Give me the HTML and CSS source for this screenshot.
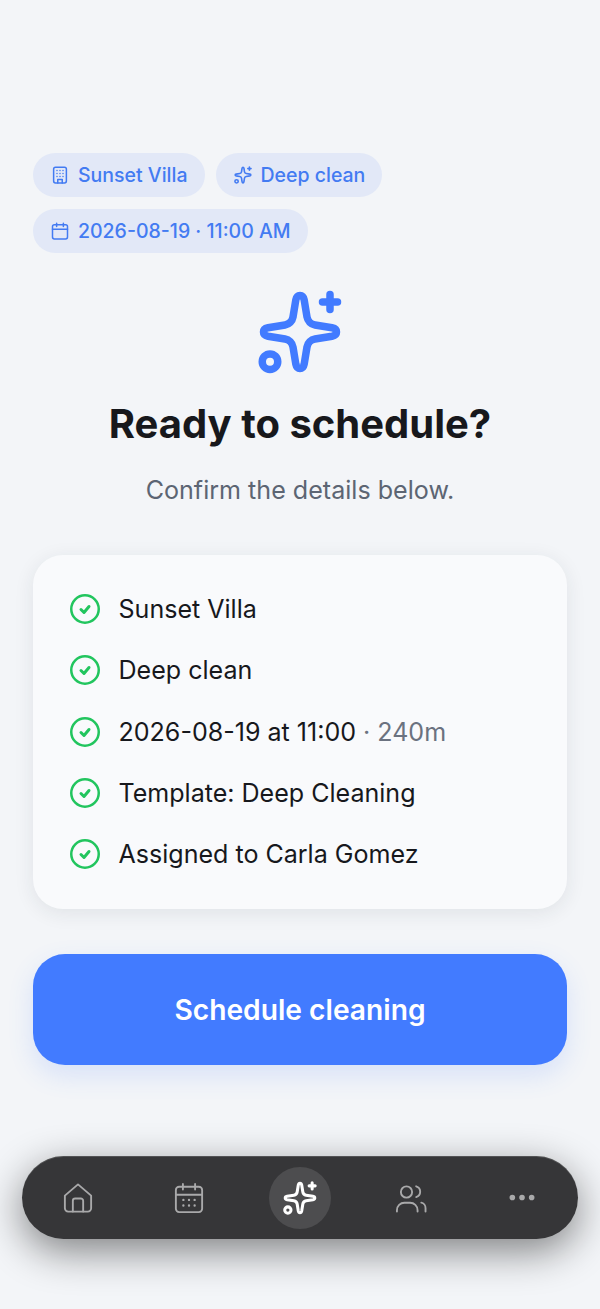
FILE: index.html
```html
<!DOCTYPE html>
<html lang="en">
<head>
  <meta charset="UTF-8" />
  <title>Schedule cleaning</title>
  <link rel="stylesheet" href="styles.css">
</head>
<body>
  <div class="page">
    <div class="pills">
      <span class="pill">
        <svg class="pill-icon" viewBox="0 0 24 24"><rect x="3.500" y="1.500" width="17" height="21" rx="2.500"/><path d="M9 22.500v-4.500h6v4.500"/><path class="dots" d="M8 6h.01M12 6h.01M16 6h.01M8 10h.01M12 10h.01M16 10h.01M8 14h.01M12 14h.01M16 14h.01"/></svg>
        Sunset Villa
      </span>
      <span class="pill">
        <svg class="pill-icon" viewBox="0 0 84 84"><use href="#sparkle"/></svg>
        Deep clean
      </span>
      <span class="pill">
        <svg class="pill-icon" viewBox="0 0 24 24"><rect x="2" y="3.500" width="20" height="19" rx="2.500"/><path d="M2 9.500h20M7.500 1.500v4.500M16.500 1.500v4.500"/></svg>
        2026-08-19 · 11:00 AM
      </span>
    </div>

    <div class="hero">
      <svg class="hero-icon" viewBox="0 0 84 84">
        <defs>
          <g id="sparkle">
            <path d="M42 5.500C44.500 5.500 45.700 7.500 46.200 10L49 27C49.700 31 53 34.300 57 35L74 37.800C76.500 38.300 78.500 39.500 78.500 42C78.500 44.500 76.500 45.700 74 46.200L57 49C53 49.700 49.700 53 49 57L46.200 74C45.700 76.500 44.500 78.500 42 78.500C39.500 78.500 38.300 76.500 37.800 74L35 57C34.300 53 31 49.700 27 49L10 46.200C7.500 45.700 5.500 44.500 5.500 42C5.500 39.500 7.500 38.300 10 37.800L27 35C31 34.300 34.300 31 35 27L37.800 10C38.300 7.500 39.500 5.500 42 5.500z"/>
            <path d="M72 4.500v15M64.500 12h15"/>
            <circle cx="12" cy="71.700" r="7.750"/>
          </g>
        </defs>
        <use href="#sparkle"/>
      </svg>
      <h1>Ready to schedule?</h1>
      <p>Confirm the details below.</p>
    </div>

    <div class="card">
      <div class="check-row">
        <svg class="check" viewBox="0 0 32 32"><circle cx="16" cy="16" r="13.750"/><path class="tick" d="M12 16.500l3 3 5-6"/></svg>
        <span>Sunset Villa</span>
      </div>
      <div class="check-row">
        <svg class="check" viewBox="0 0 32 32"><circle cx="16" cy="16" r="13.750"/><path class="tick" d="M12 16.500l3 3 5-6"/></svg>
        <span>Deep clean</span>
      </div>
      <div class="check-row">
        <svg class="check" viewBox="0 0 32 32"><circle cx="16" cy="16" r="13.750"/><path class="tick" d="M12 16.500l3 3 5-6"/></svg>
        <span>2026-08-19 at 11:00 <span class="muted">· 240m</span></span>
      </div>
      <div class="check-row">
        <svg class="check" viewBox="0 0 32 32"><circle cx="16" cy="16" r="13.750"/><path class="tick" d="M12 16.500l3 3 5-6"/></svg>
        <span>Template: Deep Cleaning</span>
      </div>
      <div class="check-row">
        <svg class="check" viewBox="0 0 32 32"><circle cx="16" cy="16" r="13.750"/><path class="tick" d="M12 16.500l3 3 5-6"/></svg>
        <span>Assigned to Carla Gomez</span>
      </div>
    </div>

    <button class="schedule-btn">Schedule cleaning</button>
  </div>

  <nav class="tabbar">
    <a class="tab">
      <svg viewBox="0 0 32 32"><path d="M2 13.500L16 1.500l14 12V27a3.500 3.500 0 0 1-3.500 3.500h-21A3.500 3.500 0 0 1 2 27z"/><path d="M10.500 30.500V19a2.500 2.500 0 0 1 2.500-2.500h6a2.500 2.500 0 0 1 2.500 2.500v11.500"/></svg>
    </a>
    <a class="tab">
      <svg viewBox="0 0 32 32"><rect x="2" y="4" width="28" height="27" rx="3.500"/><path d="M2 12.500h28M9.500 1v6M22.500 1v6"/><path class="cal-dots" d="M10 18h.01M16 18h.01M22 18h.01M10 24h.01M16 24h.01M22 24h.01"/></svg>
    </a>
    <a class="tab tab-active">
      <svg viewBox="0 0 84 84"><use href="#sparkle"/></svg>
    </a>
    <a class="tab">
      <svg viewBox="0 0 32 32"><circle cx="11.200" cy="9.600" r="6"/><path d="M1 30.500v-1.500a8 8 0 0 1 8-8h6a8 8 0 0 1 8 8v1.500"/><path d="M21.500 3.500a6 6 0 0 1 0 11.500M27 21a5 6 0 0 1 4.500 6v3.500"/></svg>
    </a>
    <a class="tab">
      <svg viewBox="0 0 32 32"><path class="more-dots" d="M5.700 15.500h.01M16 15.500h.01M26.300 15.500h.01"/></svg>
    </a>
  </nav>
</body>
</html>
```

FILE: styles.css
```css
* { box-sizing: border-box; }
html, body {
  height: 100%;
  margin: 0;
  padding: 0;
}
body {
  width: 600px;
  height: 1309px;
  overflow: hidden;
  display: flex;
  flex-direction: column;
  font-family: Inter, "Noto Sans", sans-serif;
  background: #f3f5f8;
  color: #17181c;
}

.page {
  padding: 153px 33px 0;
}

.pills {
  display: flex;
  flex-wrap: wrap;
  gap: 12px 11px;
}
.pill {
  display: inline-flex;
  align-items: center;
  gap: 9px;
  height: 44px;
  padding: 0 17px 0 18px;
  border-radius: 22px;
  background: #e2e8f7;
  color: #437bf2;
  font-size: 19.500px;
  font-weight: 500;
}
.pill-icon {
  width: 18px;
  height: 18px;
  fill: none;
  stroke: #437bf2;
  stroke-width: 2;
  stroke-linecap: round;
  stroke-linejoin: round;
  overflow: visible;
}
.pill-icon use {
  stroke-width: 7.500;
}

.hero {
  display: flex;
  flex-direction: column;
  align-items: center;
  margin-top: 37px;
}
.hero-icon {
  width: 84px;
  height: 84px;
  fill: none;
  stroke: #427bff;
  stroke-width: 7.500;
  stroke-linecap: round;
  stroke-linejoin: round;
}
.hero h1 {
  margin: 26px 0 0;
  font-size: 40px;
  line-height: 48px;
  font-weight: 700;
}
.hero p {
  margin: 26px 0 0;
  font-size: 25.100px;
  line-height: 32px;
  color: #5c6573;
}

.card {
  display: flex;
  flex-direction: column;
  gap: 21.250px;
  margin-top: 49px;
  padding: 34px 36px 35px;
  border-radius: 30px;
  background: #f9fafc;
  box-shadow: 0 4px 20px rgba(30, 40, 60, 0.09);
}
.check-row {
  display: flex;
  align-items: center;
  gap: 17.500px;
  height: 40px;
  font-size: 25.050px;
}
.check {
  width: 32px;
  height: 32px;
  flex: none;
  fill: none;
  stroke: #22c55e;
  stroke-width: 2.500;
  stroke-linecap: round;
  stroke-linejoin: round;
}
.check .tick {
  stroke-width: 3;
}
.muted {
  color: #6b7280;
}

.schedule-btn {
  display: block;
  width: 100%;
  height: 111px;
  margin-top: 45px;
  border: none;
  border-radius: 32px;
  background: #427bff;
  color: white;
  font-family: inherit;
  font-size: 28.200px;
  font-weight: 600;
  box-shadow: 0 10px 26px rgba(66, 123, 255, 0.16);
}

.tabbar {
  display: flex;
  justify-content: space-around;
  align-items: center;
  width: 556px;
  height: 83px;
  margin: 91px 22px 0;
  border-radius: 42px;
  background: #363638;
  box-shadow: inset 0 1px 0 rgba(255, 255, 255, 0.15), 0 12px 40px rgba(0, 0, 0, 0.48);
}
.tab {
  display: flex;
  align-items: center;
  justify-content: center;
  width: 62px;
  height: 62px;
  border-radius: 50%;
}
.tab svg {
  width: 30px;
  height: 30px;
  fill: none;
  stroke: #a9a9aa;
  stroke-width: 2;
  stroke-linecap: round;
  stroke-linejoin: round;
  overflow: visible;
}
.tab .cal-dots {
  stroke-width: 2.500;
}
.tab .more-dots {
  stroke-width: 6;
}
.tab-active {
  background: #4d4d4f;
}
.tab-active svg {
  width: 34px;
  height: 34px;
  stroke: white;
  stroke-width: 7.500;
}
```
